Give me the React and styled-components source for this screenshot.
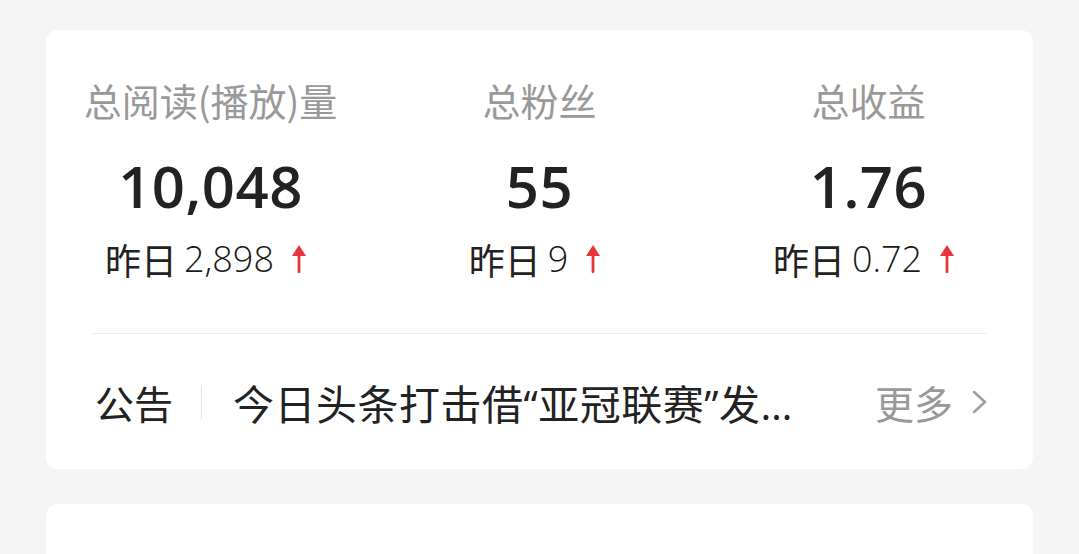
import React from "react";
import styled, { createGlobalStyle } from "styled-components";

const GlobalStyle = createGlobalStyle`
  html, body {
    margin: 0;
    padding: 0;
    background: #f5f5f5;
  }
  body {
    font-family: "Open Sans", "Noto Sans CJK SC", sans-serif;
  }
`;

const stats = [
  { label: "总阅读(播放)量", value: "10,048", yesterday: "2,898" },
  { label: "总粉丝", value: "55", yesterday: "9" },
  { label: "总收益", value: "1.76", yesterday: "0.72" },
];

const Page = styled.div`
  padding: 30px 46px 0 46px;
  display: flex;
  flex-direction: column;
  gap: 35px;
  height: 554px;
  box-sizing: border-box;
  overflow: hidden;
`;

const Card = styled.div`
  background: #fff;
  border-radius: 12px;
  flex-shrink: 0;
  height: ${(props) => props.h || "auto"};
`;

const StatsRow = styled.div`
  display: grid;
  grid-template-columns: repeat(3, 1fr);
  padding-top: 48px;
`;

const Stat = styled.div`
  display: flex;
  flex-direction: column;
  align-items: center;
`;

const Label = styled.div`
  font-family: "Noto Sans CJK SC", sans-serif;
  font-size: 38px;
  line-height: 44px;
  color: #999;
`;

const Value = styled.div`
  margin-top: 32px;
  font-family: "Open Sans", sans-serif;
  font-weight: 600;
  font-size: 58px;
  line-height: 64px;
  color: #222;
  letter-spacing: 0.5px;
`;

const Yesterday = styled.div`
  margin-top: 22px;
  display: flex;
  align-items: center;
  line-height: 38px;
  color: #222;
  span.cn {
    font-family: "Noto Sans CJK SC", sans-serif;
    font-size: 36px;
  }
  span.num {
    font-family: "Open Sans", sans-serif;
    font-weight: 300;
    font-size: 36px;
    margin-left: 7px;
    color: #1a1a1a;
  }
  svg {
    margin-left: 17px;
    margin-right: 9px;
  }
`;

const Divider = styled.div`
  margin: 55px 46px 0 46px;
  height: 1px;
  background: #eeeeee;
`;

const Notice = styled.div`
  height: 135px;
  display: flex;
  align-items: center;
  padding: 0 46px 0 49px;
  font-family: "Open Sans", "Noto Sans CJK SC", sans-serif;
  font-size: 39px;
  color: #222;
`;

const NoticeTag = styled.div`
  flex-shrink: 0;
`;

const Sep = styled.div`
  width: 1px;
  height: 34px;
  background: #e2e2e2;
  margin: 0 31px 0 28px;
  flex-shrink: 0;
`;

const NoticeText = styled.div`
  flex: 1;
  white-space: nowrap;
  overflow: hidden;
  font-size: 41px;
  letter-spacing: 0.5px;
`;

const More = styled.div`
  display: flex;
  align-items: center;
  color: #999;
  flex-shrink: 0;
  svg {
    margin-left: 18px;
  }
`;

const UpArrow = () => (
  <svg width="16" height="30" viewBox="0 0 16 30">
    <path d="M8 1 L15 12 L1 12 Z" fill="#e8353d" />
    <rect x="6.6" y="10" width="2.8" height="19" rx="1.2" fill="#e8353d" />
  </svg>
);

const Chevron = () => (
  <svg width="16" height="28" viewBox="0 0 16 28">
    <path d="M3 4 L14 14 L3 24" fill="none" stroke="#a0a0a0" strokeWidth="2.6" strokeLinecap="round" strokeLinejoin="round" />
  </svg>
);

export default function App() {
  return (
    <>
      <GlobalStyle />
      <Page>
        <Card>
          <StatsRow>
            {stats.map((s) => (
              <Stat key={s.label}>
                <Label>{s.label}</Label>
                <Value>{s.value}</Value>
                <Yesterday>
                  <span className="cn">昨日</span>
                  <span className="num">{s.yesterday}</span>
                  <UpArrow />
                </Yesterday>
              </Stat>
            ))}
          </StatsRow>
          <Divider />
          <Notice>
            <NoticeTag>公告</NoticeTag>
            <Sep />
            <NoticeText>今日头条打击借“亚冠联赛”发…</NoticeText>
            <More>
              更多
              <Chevron />
            </More>
          </Notice>
        </Card>
        <Card h="200px" />
      </Page>
    </>
  );
}
